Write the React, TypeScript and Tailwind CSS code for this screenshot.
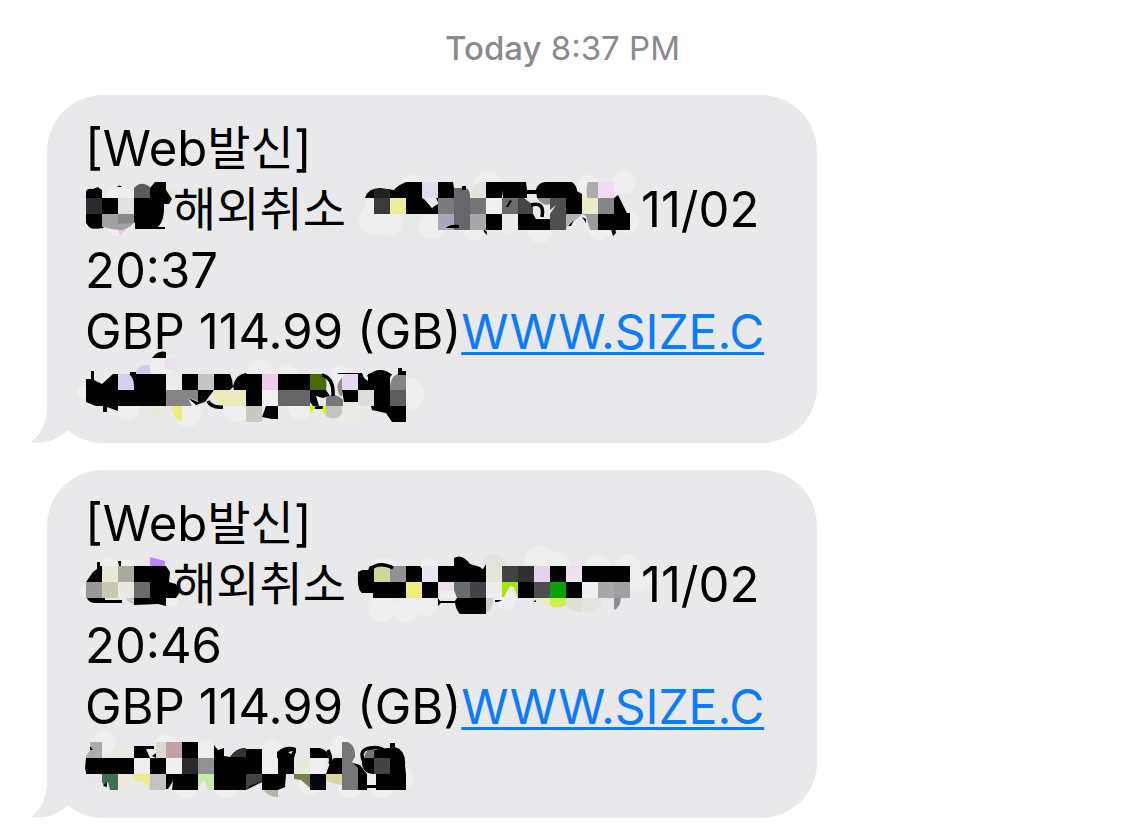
import React from "react";

type Shape = [fill: string, d: string];
type Blob = [cx: number, cy: number, r: number, fill?: string];
type Cell = [x: number, y: number, fill: string, w?: number, h?: number];

interface Scribble {
  box: string;
  blobs: Blob[];
  shapes: Shape[];
  cells: Cell[];
  over?: Shape[];
  strokes?: string;
}

const K = "#000000";
const W = "#efeff0";
const G = "#e9e9eb";

const senderA: Scribble = {
  box: "85 179 88 61",
  blobs: [[118, 199, 13], [118, 224, 12], [84, 206, 6, "#ece2ef"], [170, 192, 5, "#e3eadb"]],
  shapes: [
    [K, "M117 187Q119 184 122 187Z"],
    [W, "M105 198Q106 186 120 187Q132 188 134 198V214H105Z"],
    [K, "M86 191Q88 188 93 189L98 187L99 188L102 190V198H118V214H102V226L104 228Q92 230 89 227L86 223Z"],
    ["#a1a1a3", "M102 214H134V223Q126 231 120 230Q108 229 102 226Z"],
    ["#898989", "M118 214H134V223L118 224Z"],
    ["#e9c9f2", "M118 230H126L120 236Z"],
    [K, "M134 198H150V188L155 182H166V190L172 199L169 204H164Q165 220 158 227H165V229H135V223L134 222Z"],
    ["#5a5a5a", "M134 198V188Q141 180 150 187V198Z"],
  ],
  cells: [[86, 198, "#2b2b2d"], [118, 198, "#e1e2e4"]],
};

const cardA: Scribble = {
  box: "360 179 275 61",
  blobs: [[374, 220, 15], [388, 222, 14], [488, 186, 15], [432, 226, 13], [413, 186, 12], [474, 228, 12], [624, 182, 12], [628, 222, 11], [540, 230, 13], [588, 186, 11], [600, 228, 12], [510, 222, 12]],
  shapes: [
    [K, "M365 198Q368 188 380 188L394 190Q398 185 406 182H422V198L424 198L432 208L439 204L436 198L438 182H453Q455 190 454 198H440L438 214H406V198Z"],
    [W, "M366 198H374V214H366Z"],
    ["#222224", "M374 189H390V198H374Z"],
    ["#67676b", "M454 188H466Q470 190 470 196V230H454Z"],
    ["#e3e3dc", "M470 198Q472 183 480 182H486V198Z"],
    [K, "M462 186H466V190H462ZM483 228L487 232V235L484 232Z"],
    [K, "M501 182H526L527 190V198H503ZM526 190H540V194H526Z"],
    ["#454547", "M518 198H524L533 205V214H518Z"],
    [K, "M406 198H424L431 208L438 204V214H406Z"],
    [K, "M518 214H533L536 219H550V230H518ZM536 190Q538 182 546 182H572Q577 186 577 191L582 194V214H566V198H537Z"],
    ["#8e8e90", "M537 198H550V204Q543 207 537 198Z"],
    ["#4f4f51", "M550 198H566V230H550V214L556 205L550 210Z"],
    ["#b0b0b0", "M566 214H582L578 218L568 225L566 229Z"],
    [K, "M568 226L574 220L571 226ZM587 193Q590 191 590 198H588Z"],
    ["#acacae", "M588 182H598V198H588Q585 190 588 182Z"],
    ["#9b9b9d", "M586 216L582 214H598V230H590Z"],
    [K, "M582 217L586 219V223ZM614 198L618 195L627 213H630V230H598V214H614ZM611 228L615 227L616 233L613 236L612 233Z"],
  ],
  cells: [
    [374, 198, "#3a3a3c"], [390, 198, "#ecec9c"], [422, 182, "#e2dbee"], [438, 198, "#7b7b7d"], [470, 198, "#757577"],
    [438, 214, "#a9a8bb"], [470, 214, "#a8a8aa"], [486, 182, K], [486, 198, "#f0f0f2"], [486, 214, K],
    [502, 198, "#6b6b6d"], [502, 214, "#ededef"], [598, 182, "#efdcf2"], [582, 198, "#ebebc6"], [598, 198, "#868688"],
  ],
  over: [[G, "M422 198H433L438 203L432 208L424 199Z"], [K, "M446 228Q450 224 459 225V228ZM506 207L510 200L512 201L508 207Z"]],
  strokes: "M531 205Q545 201 542 217",
};

const balanceA: Scribble = {
  box: "85 362 335 61",
  blobs: [[84, 392, 7], [128, 408, 12], [158, 410, 9, "#e9e9dd"], [188, 414, 13], [236, 408, 14], [162, 366, 12], [170, 364, 6, "#ecdfee"], [260, 372, 12], [286, 376, 12], [300, 408, 12], [352, 412, 13, "#ebebe6"], [408, 394, 16], [340, 374, 9]],
  shapes: [
    [K, "M86 379H91V371H94V380L102 384L113 374H166V406H118V411L107 407V412H103V406H96L86 402Z"],
    ["#d4d1ef", "M118 374H129Q134 378 134 386V390H118Z"],
    ["#d6cbee", "M134 373Q140 363 150 365V374H134Z"],
    [K, "M130 372H136V374H130ZM152 358Q158 350 166 352V358Z"],
    ["#858587", "M166 390H198V401L188 398L192 406H166Z"],
    [K, "M198 390H214L205 402L196 405L188 398L198 402ZM214 374H230Q233 380 233 387L230 390H214ZM233 386Q236 374 246 373V390H234Z"],
    ["#ecebb8", "M214 390H246V406H225Q216 404 214 394Z"],
    ["#ecec7e", "M172 406H182V422Q174 420 172 410Z"],
    [K, "M240 379Q244 373 248 374V390H240Z"],
    [K, "M266 406H278V419H272L262 417Z"],
    ["#4a6a00", "M310 374H322Q328 378 326 390H310Z"],
    [K, "M310 390H326L330 396L323 398L316 396L319 406H323V409H315L310 402Z"],
    ["#d9f800", "M310 406H316L310 414ZM323 406H327V416Q321 412 323 406Z"],
    ["#777779", "M326 406V398Q334 391 343 400V406Z"],
    ["#c4c4be", "M326 406H342V414Q334 422 326 416Z"],
    ["#909092", "M342 378Q334 385 340 396H342Z"],
    [K, "M338 373H362L364 378L368 381V374Q378 371 390 374V414L372 410L371 406H374V390H358V402H344L342 390H358V374H338Z"],
    ["#e5d6f1", "M342 378L346 374H358V390H342Z"],
    [K, "M358 374H362L364 380L368 384V390H358Z"],
    ["#858587", "M390 390Q390 376 398 374H406V390Z"],
    [K, "M390 406H406V422H392L386 413ZM398 368H402V371H406V375H398Z"],
  ],
  cells: [
    [166, 374, "#ececee"], [182, 374, K], [198, 374, "#c4c4c6"], [246, 374, K, 16, 32], [230, 390, "#ecebc0"], [262, 374, "#eccded"],
    [278, 374, K, 32], [262, 390, "#f0f0f2"], [278, 390, "#656567", 32], [246, 406, "#c9c9c2"], [358, 390, "#deded8"], [390, 390, "#5e5e60"],
  ],
  strokes: "M208 401Q211 408 223 407M322 375Q334 378 333 396M368 377Q380 367 391 376",
};

const senderB: Scribble = {
  box: "85 554 88 61",
  blobs: [[108, 568, 11], [128, 570, 11], [172, 601, 6], [84, 592, 5]],
  shapes: [
    [K, "M97 562H100V566H102V582H86L93 572L97 569ZM118 561H121V566H119Z"],
    [K, "M134 566H166L170 572L169 582L176 584L180 592L176 598H166V606L158 604L134 605V598H150V582H134Z"],
    [K, "M87 598H105V600H122V603H94Q88 602 87 598Z"],
    ["#bb86f5", "M150 557L165 561V566H150Z"],
    ["#c7c7c9", "M126 598H134V604Q128 603 126 598Z"],
  ],
  cells: [[102, 566, "#e9e7d6"], [118, 566, "#aaaa9f"], [86, 582, "#98989a"], [102, 582, "#c9c9b1"], [118, 582, "#e9e9e2"], [134, 582, "#6b6b6d"]],
};

const cardB: Scribble = {
  box: "360 554 275 61",
  blobs: [[382, 608, 14], [406, 610, 13], [426, 604, 12], [430, 568, 10], [494, 566, 12, "#e2e2e1"], [384, 574, 16], [540, 562, 16], [556, 566, 14], [598, 568, 13], [628, 566, 12], [638, 582, 10], [590, 600, 12, "#e3e3e0"], [506, 600, 10], [650, 580, 5]],
  shapes: [
    [K, "M358 572L362 570H368L370 566H374V582H406V598H373V593H362Q357 590 358 572Z"],
    ["#cbd89a", "M374 566H386L390 571V582H374Z"],
    [K, "M406 566H420L424 571L422 582H406Z"],
    [K, "M438 566H454V558Q462 553 470 564L480 567L486 572V582H438ZM482 571L486 564V574Z"],
    [K, "M438 598L440 601H455L457 598H486V614H460Q456 610 455 603H441L438 606Z"],
    ["#cfcec4", "M486 598H493Q493 610 486 613Z"],
    ["#a8e600", "M502 582H518V598L514 587L510 586L504 597H502Z"],
    ["#8d8d8f", "M614 598H621Q620 608 614 610Z"],
    ["#edecb0", "M534 598H550V604Q540 602 534 598Z"],
    ["#cdee4c", "M550 598H566V605Q558 610 550 606Z"],
    ["#dfdfd8", "M566 598H582V612Q572 614 566 604Z"],
    [K, "M495 600H502L498 602H495ZM533 602L536 600V602Z"],
  ],
  cells: [
    [390, 566, "#929294"], [422, 566, "#e8e6f2"], [406, 582, "#eded80"], [422, 582, K], [438, 582, "#ecdfec"], [454, 582, "#6b6b6d"],
    [470, 582, "#434347"], [486, 566, "#e6e5da"], [486, 582, "#ececee"], [502, 566, "#434345"], [518, 566, "#303032"], [534, 566, "#e5d2f0"],
    [550, 566, K], [566, 566, "#efe1ef"], [582, 566, K, 48], [518, 582, K], [534, 582, "#4d4d4f"], [550, 582, "#0aa00a"], [566, 582, K],
    [582, 582, "#efeff1"], [598, 582, "#a8a8aa"], [614, 582, "#a0a0a2"],
  ],
  over: [[W, "M440 592L454 590L457 598H440Z"]],
  strokes: "M370 569Q380 561 393 568",
};

const balanceB: Scribble = {
  box: "85 737 335 61",
  blobs: [[104, 742, 12], [126, 756, 11, "#ebebe2"], [166, 746, 12], [206, 752, 12], [186, 788, 11], [226, 786, 12], [272, 752, 12], [340, 746, 10], [350, 786, 12], [382, 786, 12], [404, 778, 10], [310, 784, 11]],
  shapes: [
    ["#ababad", "M90 742H102V758H86V756L91 749Z"],
    [K, "M86 758V772L85 768ZM90 746L93 750H90ZM134 746H154V749H146L150 758H134ZM152 756L156 753V758Z"],
    ["#dadacf", "M156 742H166V758H156Z"],
    [K, "M214 745L218 750L224 748V756L230 757Q236 748 246 748V790H214Z"],
    ["#3f6e55", "M102 774H118V790H110L108 782L104 786L102 782Z"],
    [K, "M103 786L107 782V787Z"],
    ["#ebebdc", "M118 774H134V784L124 790H118Z"],
    ["#ecec8c", "M134 774H150V790L143 780L137 782L134 780Z"],
    [K, "M166 774H198V790H172L173 781L168 789H166Z"],
    ["#c6eda8", "M198 774H214V790H208L204 779L198 788Z"],
    ["#ece3ec", "M88 774H102V784Q92 784 88 774Z"],
    [K, "M246 749H262V774H277V752Q286 744 296 748V752L294 758V774H286L285 787L278 790H262V782L246 790Z"],
    ["#434345", "M246 774H262V781L250 786L246 790Z"],
    [K, "M310 748H320Q328 750 329 758H310ZM330 763L334 758H342V774H326Z"],
    ["#7e7e4e", "M294 774H310V788L301 780L294 779Z"],
    ["#d8d7a0", "M326 774H342V785L331 783L326 780Z"],
    [K, "M350 762L360 765L367 774V790H356ZM367 785H377V788H367Z"],
    ["#767678", "M342 742H348Q356 746 355 757L352 762L358 768V790H342Z"],
    ["#b4b4a8", "M264 790H278V797Q268 797 264 790Z"],
    [K, "M362 758H374V774Q364 774 362 765ZM390 748V743H395V747Q406 750 405 765L406 774V790H376V774H390V758H374V750L388 748Z"],
    ["#747476", "M364 758Q366 748 374 748V758Z"],
  ],
  cells: [
    [86, 758, K, 48], [166, 742, "#c1a3a7"], [182, 742, K], [134, 758, W], [150, 758, K], [166, 758, W], [182, 758, "#2a2a2e"],
    [198, 758, "#929294"], [150, 774, "#c3c3c5"], [262, 758, W], [294, 758, "#e4ecdc"], [310, 758, W], [310, 774, "#060610"], [374, 758, "#434345"],
  ],
  over: [["#343436", "M230 757Q236 748 246 748V757Z"], [W, "M368 776H376V784H368Z"], [W, "M288 752L293 751L291 754Z"]],
  strokes: "M328 750Q332 758 330 764M364 762Q358 750 370 748Q380 746 386 752",
};

function Redaction({ art, className }: { art: Scribble; className: string }) {
  return (
    <svg aria-hidden="true" viewBox={art.box} className={`block shrink-0 overflow-visible ${className}`}>
      {art.blobs.map(([cx, cy, r, fill], i) => (
        <circle key={i} cx={cx} cy={cy} r={r} fill={fill ?? W} />
      ))}
      {art.shapes.map(([fill, d], i) => (
        <path key={i} fill={fill} d={d} />
      ))}
      {art.cells.map(([x, y, fill, w, h], i) => (
        <rect key={i} x={x} y={y} width={w ?? 16} height={h ?? 16} fill={fill} shapeRendering="crispEdges" />
      ))}
      {art.over?.map(([fill, d], i) => (
        <path key={i} fill={fill} d={d} />
      ))}
      {art.strokes && <path d={art.strokes} fill="none" stroke={K} strokeWidth="3.5" />}
    </svg>
  );
}

function Korean({ children }: { children: React.ReactNode }) {
  return (
    <span lang="ko" className="self-start font-['Noto_Sans_CJK_KR',sans-serif] text-[47px] leading-[53px] font-normal">
      {children}
    </span>
  );
}

interface MessageProps {
  time: string;
  sender: Scribble;
  card: Scribble;
  balance: Scribble;
}

function Message({ time, sender, card, balance }: MessageProps) {
  return (
    <article className="relative w-fit rounded-[56px] bg-[#e9e9eb] pt-[23px] pr-[53px] pb-5 pl-[38px] text-[49px] leading-[61px] whitespace-nowrap text-black">
      <svg aria-hidden="true" viewBox="30 383 70 60" className="absolute bottom-0 -left-[17px] h-[60px] w-[70px]">
        <path fill="#e9e9eb" d="M47 383V405Q47 430 31 442Q52 445 67 431H85L75 383Z" />
      </svg>
      <div className="relative">
        <p className="flex h-[61px] items-center">
          [Web<Korean>발신</Korean>]
        </p>
        <div className="flex h-[61px] items-center">
          <Redaction art={sender} className="h-[61px] w-[88px]" />
          <Korean>해외취소</Korean>
          <Redaction art={card} className="ml-[14px] h-[61px] w-[275px]" />
          <span className="ml-[6px]">11/02</span>
        </div>
        <p className="h-[61px]">{time}</p>
        <p className="h-[61px]">
          GBP 114.99 (GB)
          <a href="#size" className="text-[48px] text-[#0b7bff] underline decoration-[3px] underline-offset-[3px]">
            WWW.SIZE.C
          </a>
        </p>
        <Redaction art={balance} className="h-[61px] w-[335px]" />
      </div>
    </article>
  );
}

export default function App() {
  return (
    <main className="min-h-screen overflow-x-hidden bg-white pt-7 pb-[10px] pl-[47px] font-['Inter',sans-serif]">
      <header className="mr-[47px] mb-[27px] text-center text-[33px] leading-10 text-[#8a8a8e]">
        <time>
          <span className="font-medium">Today</span> 8:37 PM
        </time>
      </header>
      <section aria-label="Messages" className="flex flex-col gap-[27px]">
        <Message time="20:37" sender={senderA} card={cardA} balance={balanceA} />
        <Message time="20:46" sender={senderB} card={cardB} balance={balanceB} />
      </section>
    </main>
  );
}
